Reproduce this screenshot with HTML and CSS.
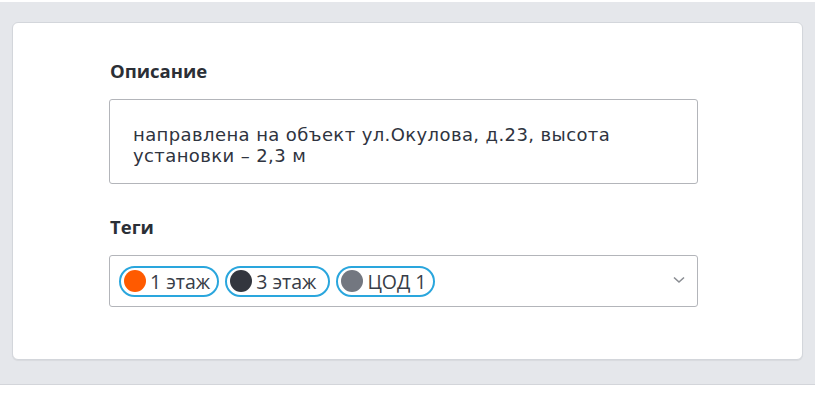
FILE: index.html
```html
<!DOCTYPE html>
<html lang="ru">
<head>
<meta charset="utf-8">
<link rel="stylesheet" href="styles.css">
</head>
<body>
<div class="page">
  <div class="card">
    <div class="field">
      <div class="label">Описание</div>
      <div class="textarea">направлена на объект ул.Окулова, д.23, высота установки – 2,3 м</div>
    </div>
    <div class="field tags-field">
      <div class="label">Теги</div>
      <div class="select">
        <div class="chips">
          <span class="chip"><span class="dot dot-orange"></span>1 этаж</span>
          <span class="chip chip-wide"><span class="dot dot-dark"></span>3 этаж</span>
          <span class="chip"><span class="dot dot-gray"></span>ЦОД 1</span>
        </div>
        <svg class="chevron" width="12" height="8" viewBox="0 0 12 8"><path d="M1 1.5 L6 6 L11 1.5" fill="none" stroke="#8a8d93" stroke-width="1.6"/></svg>
      </div>
    </div>
  </div>
</div>
</body>
</html>
```
FILE: styles.css
```css
html, body {
  margin: 0;
  padding: 0;
  background: #ffffff;
}
.page {
  margin-top: 2px;
  background: #e5e7eb;
  padding: 20px 12px 24px 12px;
  border-bottom: 1px solid #d3d5da;
}
.card {
  background: #ffffff;
  border: 1px solid #d3d6db;
  border-radius: 6px;
  box-shadow: 0 1px 1px rgba(0,0,0,0.06);
  padding: 36px 104px 51px 96px;
  height: 249px;
}
.label {
  font-family: "Open Sans", "Noto Sans", sans-serif;
  font-weight: 700;
  font-size: 18.5px;
  line-height: 24px;
  color: #2b2f36;
  padding-left: 1px;
}
.textarea {
  margin-top: 16px;
  border: 1px solid #b3b5ba;
  border-radius: 3px;
  height: 59px;
  padding: 24px 24px 0 23px;
  font-family: "DejaVu Sans", Verdana, sans-serif;
  font-size: 18px;
  letter-spacing: 0.4px;
  line-height: 21px;
  color: #2f3440;
}
.tags-field {
  margin-top: 31px;
}
.select {
  margin-top: 16px;
  border: 1px solid #b3b5ba;
  border-radius: 3px;
  height: 50px;
  padding: 0 10px 0 9px;
  display: flex;
  align-items: center;
  justify-content: space-between;
}
.chips {
  display: flex;
  gap: 6px;
}
.chip {
  display: inline-flex;
  align-items: center;
  gap: 4px;
  height: 27px;
  border: 2px solid #2aa6dd;
  border-radius: 16px;
  padding: 0 7px 0 3px;
  font-family: "Open Sans", "Noto Sans", sans-serif;
  font-size: 19.5px;
  color: #383d47;
  white-space: nowrap;
}
.chip-wide {
  padding-right: 12px;
}
.dot {
  width: 22px;
  height: 22px;
  border-radius: 50%;
  flex: none;
}
.dot-orange { background: #ff5a00; }
.dot-dark { background: #33363e; }
.dot-gray { background: #737780; }
.chevron {
  margin-right: 2px;
  margin-top: -2px;
}
```
